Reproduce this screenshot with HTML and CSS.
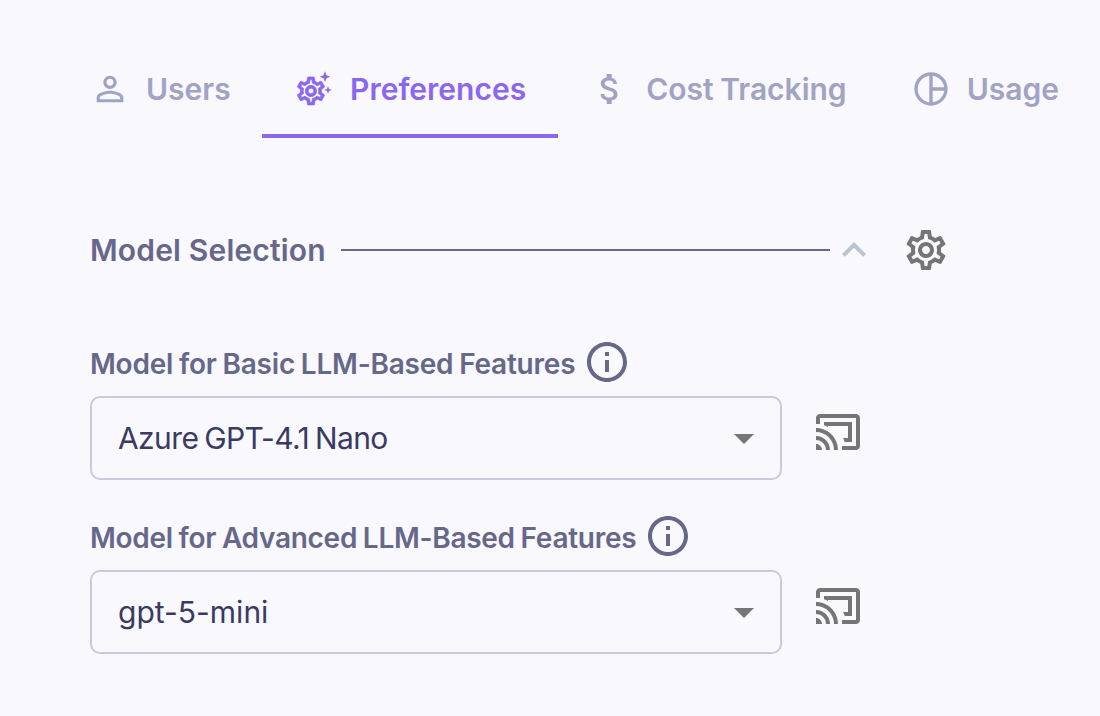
FILE: index.html
```html
<!DOCTYPE html>
<html lang="en">
<head>
<meta charset="utf-8">
<title>Preferences</title>
<link rel="stylesheet" href="styles.css">
</head>
<body>
<nav class="tabs">
  <div class="tab">
    <svg class="tab-icon" viewBox="0 0 24 24" fill="currentColor"><path d="M12 5.900c1.160 0 2.100.940 2.100 2.100s-.940 2.100-2.100 2.100S9.900 9.160 9.900 8s.940-2.100 2.100-2.100m0 9c2.970 0 6.100 1.460 6.100 2.100v1.100H5.900V17c0-.640 3.130-2.100 6.100-2.100M12 4C9.790 4 8 5.790 8 8s1.790 4 4 4 4-1.790 4-4-1.790-4-4-4zm0 9c-2.670 0-8 1.340-8 4v3h16v-3c0-2.660-5.330-4-8-4z"/></svg>
    <span>Users</span>
  </div>
  <div class="tab active">
    <svg class="tab-icon" viewBox="0 0 24 24" fill="currentColor"><g transform="translate(0.1 3.1) scale(0.84)"><path d="M19.430 12.980c.040-.320.070-.640.070-.980 0-.340-.030-.660-.070-.980l2.110-1.650c.190-.150.240-.420.120-.640l-2-3.460c-.090-.160-.260-.250-.440-.250-.060 0-.120.010-.170.030l-2.490 1c-.520-.400-1.080-.730-1.690-.980l-.380-2.650C14.460 2.180 14.250 2 14 2h-4c-.250 0-.460.180-.490.420l-.380 2.650c-.610.250-1.170.590-1.690.980l-2.490-1c-.060-.020-.120-.030-.180-.030-.170 0-.340.090-.430.250l-2 3.460c-.130.220-.070.490.120.640l2.110 1.650c-.040.320-.070.650-.070.980 0 .330.030.660.070.980l-2.110 1.650c-.190.150-.240.420-.12.640l2 3.460c.090.160.260.250.440.250.060 0 .120-.010.170-.030l2.490-1c.520.400 1.080.730 1.690.980l.380 2.650c.030.240.240.420.490.420h4c.250 0 .460-.180.490-.420l.380-2.650c.610-.250 1.170-.590 1.690-.980l2.490 1c.060.020.120.030.180.030.170 0 .340-.090.430-.250l2-3.460c.120-.220.070-.490-.12-.640l-2.110-1.650zm-1.980-1.710c.040.310.050.520.050.730 0 .210-.020.430-.05.730l-.14 1.130.890.700 1.080.840-.700 1.210-1.270-.510-1.040-.420-.900.680c-.430.320-.840.560-1.250.730l-1.060.43-.160 1.130-.200 1.350h-1.400l-.190-1.350-.160-1.130-1.060-.43c-.43-.18-.83-.41-1.230-.71l-.91-.70-1.060.43-1.270.51-.70-1.210 1.080-.84.89-.70-.14-1.130c-.03-.31-.05-.54-.05-.74s.02-.43.05-.73l.14-1.130-.89-.70-1.080-.84.70-1.210 1.270.51 1.040.42.90-.68c.43-.32.84-.56 1.250-.73l1.060-.43.16-1.130.20-1.350h1.390l.19 1.350.16 1.130 1.060.43c.43.18.83.41 1.230.71l.91.70 1.060-.43 1.270-.51.70 1.210-1.070.85-.89.70.14 1.130zM12 8c-2.210 0-4 1.790-4 4s1.790 4 4 4 4-1.790 4-4-1.790-4-4-4zm0 6c-1.100 0-2-.90-2-2s.90-2 2-2 2 .90 2 2-.90 2-2 2z" stroke="currentColor" stroke-width=".5"/></g><path d="M18.600 1.400l.900 2.300 2.300.900-2.300.900-.900 2.300-.900-2.300-2.300-.900 2.300-.900zM20.400 10.200l.600 1.800 1.800.600-1.800.600-.600 1.800-.600-1.800-1.800-.600 1.800-.600z"/></svg>
    <span>Preferences</span>
  </div>
  <div class="tab">
    <svg class="tab-icon" viewBox="0 0 24 24" fill="currentColor"><path d="M11.800 10.900c-2.270-.590-3-1.200-3-2.150 0-1.090 1.010-1.850 2.700-1.850 1.780 0 2.440.850 2.500 2.100h2.210c-.070-1.720-1.120-3.300-3.210-3.810V3h-3v2.160c-1.940.420-3.500 1.680-3.500 3.610 0 2.310 1.910 3.460 4.700 4.130 2.500.600 3 1.480 3 2.410 0 .690-.490 1.790-2.700 1.790-2.060 0-2.870-.920-2.980-2.100h-2.200c.120 2.190 1.760 3.420 3.680 3.830V21h3v-2.150c1.950-.370 3.500-1.500 3.500-3.550 0-2.840-2.430-3.810-4.700-4.400z"/></svg>
    <span>Cost Tracking</span>
  </div>
  <div class="tab">
    <svg class="tab-icon" viewBox="0 0 24 24" fill="currentColor"><path d="M12 2C6.480 2 2 6.480 2 12s4.480 10 10 10 10-4.480 10-10S17.520 2 12 2zm7.930 9H13V4.070c3.610.450 6.480 3.320 6.930 6.930zM4 12c0-4.070 3.060-7.430 7-7.930v15.860c-3.940-.500-7-3.860-7-7.930zm9 7.930V13h6.930c-.450 3.610-3.320 6.480-6.930 6.930z"/></svg>
    <span>Usage</span>
  </div>
</nav>

<main class="content">
  <header class="section-head">
    <h2 class="section-title">Model Selection</h2>
    <div class="section-rule"></div>
    <svg class="head-icon chevron" viewBox="0 0 24 24" fill="currentColor"><path d="M12 8l-6 6 1.410 1.410L12 10.830l4.590 4.580L18 14z"/></svg>
    <svg class="head-icon gear" viewBox="0 0 24 24" fill="currentColor"><path d="M19.430 12.980c.040-.320.070-.640.070-.980 0-.340-.030-.660-.070-.980l2.110-1.650c.190-.150.240-.420.120-.640l-2-3.460c-.090-.160-.260-.250-.440-.250-.060 0-.120.010-.170.030l-2.490 1c-.520-.400-1.080-.730-1.690-.980l-.380-2.650C14.460 2.180 14.250 2 14 2h-4c-.250 0-.460.180-.490.420l-.380 2.650c-.610.250-1.170.590-1.690.980l-2.490-1c-.060-.020-.120-.030-.180-.030-.170 0-.340.090-.43.250l-2 3.460c-.13.220-.07.490.12.640l2.110 1.650c-.04.320-.07.650-.07.980 0 .33.03.66.07.98l-2.110 1.650c-.19.15-.24.42-.12.64l2 3.46c.09.16.26.25.44.25.06 0 .12-.01.17-.03l2.490-1c.52.40 1.080.73 1.690.98l.38 2.650c.03.24.24.42.49.42h4c.25 0 .46-.18.49-.42l.38-2.650c.61-.25 1.170-.59 1.690-.98l2.490 1c.06.02.12.03.18.03.17 0 .34-.09.43-.25l2-3.46c.12-.22.07-.49-.12-.64l-2.110-1.650zm-1.980-1.710c.04.31.05.52.05.73 0 .21-.02.43-.05.73l-.14 1.130.89.70 1.080.84-.70 1.210-1.270-.51-1.040-.42-.90.68c-.43.32-.84.56-1.250.73l-1.060.43-.16 1.130-.20 1.350h-1.400l-.19-1.350-.16-1.130-1.060-.43c-.43-.18-.83-.41-1.230-.71l-.91-.70-1.060.43-1.270.51-.70-1.210 1.080-.84.89-.70-.14-1.130c-.03-.31-.05-.54-.05-.74s.02-.43.05-.73l.14-1.130-.89-.70-1.080-.84.70-1.210 1.270.51 1.040.42.90-.68c.43-.32.84-.56 1.250-.73l1.060-.43.16-1.130.20-1.350h1.390l.19 1.350.16 1.130 1.060.43c.43.18.83.41 1.230.71l.91.70 1.060-.43 1.270-.51.70 1.210-1.070.85-.89.70.14 1.130zM12 8c-2.210 0-4 1.790-4 4s1.790 4 4 4 4-1.790 4-4-1.790-4-4-4zm0 6c-1.100 0-2-.90-2-2s.90-2 2-2 2 .90 2 2-.90 2-2 2z"/></svg>
  </header>

  <section class="field">
    <div class="field-label">
      <span class="label-text">Model for Basic LLM-Based Features</span>
      <svg class="info" viewBox="0 0 24 24" fill="currentColor"><path d="M11 7h2v2h-2zm0 4h2v6h-2zm1-9C6.480 2 2 6.480 2 12s4.480 10 10 10 10-4.480 10-10S17.520 2 12 2zm0 18c-4.410 0-8-3.590-8-8s3.590-8 8-8 8 3.590 8 8-3.590 8-8 8z"/></svg>
    </div>
    <div class="field-row">
      <div class="select">
        <span class="value-tight">Azure GPT-4.1 Nano</span>
        <svg class="caret" viewBox="7 10 10 5" fill="currentColor"><path d="M7 10l5 5 5-5z"/></svg>
      </div>
      <svg class="cast" viewBox="0 0 24 24" fill="currentColor"><path d="M21 3H3c-1.100 0-2 .900-2 2v3h2V5h18v14h-7v2h7c1.100 0 2-.900 2-2V5c0-1.100-.900-2-2-2zM1 18v3h3c0-1.660-1.340-3-3-3zm0-4v2c2.760 0 5 2.240 5 5h2c0-3.870-3.130-7-7-7zm0-4v2c4.970 0 9 4.030 9 9h2c0-6.080-4.930-11-11-11zm18-3H5v1.630c.690.220 1.360.490 2 .830V9h10v6h-2.460c.320.640.590 1.310.820 2H19V7z"/></svg>
    </div>
  </section>

  <section class="field">
    <div class="field-label">
      <span class="label-text label-tight">Model for Advanced LLM-Based Features</span>
      <svg class="info" viewBox="0 0 24 24" fill="currentColor"><path d="M11 7h2v2h-2zm0 4h2v6h-2zm1-9C6.480 2 2 6.480 2 12s4.480 10 10 10 10-4.480 10-10S17.520 2 12 2zm0 18c-4.410 0-8-3.590-8-8s3.590-8 8-8 8 3.590 8 8-3.590 8-8 8z"/></svg>
    </div>
    <div class="field-row">
      <div class="select">
        <span>gpt-5-mini</span>
        <svg class="caret" viewBox="7 10 10 5" fill="currentColor"><path d="M7 10l5 5 5-5z"/></svg>
      </div>
      <svg class="cast" viewBox="0 0 24 24" fill="currentColor"><path d="M21 3H3c-1.100 0-2 .900-2 2v3h2V5h18v14h-7v2h7c1.100 0 2-.900 2-2V5c0-1.100-.900-2-2-2zM1 18v3h3c0-1.660-1.340-3-3-3zm0-4v2c2.760 0 5 2.240 5 5h2c0-3.870-3.130-7-7-7zm0-4v2c4.970 0 9 4.030 9 9h2c0-6.080-4.930-11-11-11zm18-3H5v1.630c.690.220 1.360.490 2 .830V9h10v6h-2.460c.320.640.590 1.310.820 2H19V7z"/></svg>
    </div>
  </section>
</main>
</body>
</html>
```
FILE: styles.css
```css
html, body {
  margin: 0;
  padding: 0;
  height: 716px;
  overflow: hidden;
  background: #f8f8fd;
  font-family: Inter, "Liberation Sans", sans-serif;
}

.tabs {
  display: flex;
  box-sizing: border-box;
  height: 138px;
  padding: 40px 0 0 58px;
}

.tab {
  display: flex;
  align-items: center;
  gap: 16px;
  box-sizing: border-box;
  height: 98px;
  padding: 4px 32px 0;
  border-bottom: 4px solid transparent;
  font-size: 30px;
  font-weight: 600;
  word-spacing: -1px;
  color: #a1a3c4;
}

.tab:first-child {
  padding-right: 31.4px;
}

.tab.active {
  color: #8b67ee;
  border-bottom-color: #8b67ee;
}

.tab-icon {
  width: 40px;
  height: 40px;
  flex: none;
}

.content {
  padding: 90px 0 0 90px;
}

.section-head {
  display: flex;
  align-items: center;
  height: 44px;
}

.section-title {
  margin: 0;
  font-size: 30px;
  font-weight: 600;
  letter-spacing: .17px;
  color: #666789;
  white-space: nowrap;
}

.section-rule {
  width: 489px;
  height: 2px;
  margin-left: 15px;
  flex: none;
  background: #666789;
}

.head-icon {
  width: 48px;
  height: 48px;
  flex: none;
}

.chevron {
  color: #b9c5cc;
}

.gear {
  margin-left: 24px;
  color: #757575;
}

.field {
  width: 800px;
}

.section-head + .field {
  margin-top: 70px;
}

.field + .field {
  margin-top: 36px;
}

.field-label {
  display: flex;
  align-items: center;
  gap: 8px;
  height: 40px;
  font-size: 28px;
  font-weight: 600;
  letter-spacing: -.22px;
  word-spacing: -1px;
  color: #666789;
}

.label-text {
  margin-top: 4px;
}

.label-tight {
  letter-spacing: -.28px;
}

.info {
  width: 48px;
  height: 48px;
  margin: -4px 0;
  flex: none;
}

.field-row {
  display: flex;
  align-items: flex-start;
  gap: 32px;
  margin-top: 14px;
}

.select {
  box-sizing: border-box;
  width: 692px;
  height: 84px;
  display: flex;
  align-items: center;
  justify-content: space-between;
  padding: 0 26px;
  border: 2px solid #c8cbe0;
  border-radius: 10px;
  font-size: 30px;
  color: #3a3a62;
}

.value-tight {
  letter-spacing: -.6px;
  word-spacing: -2px;
}

.caret {
  width: 20px;
  height: 10px;
  margin-top: 2px;
  color: #757575;
}

.cast {
  width: 48px;
  height: 48px;
  margin-top: 12px;
  flex: none;
  color: #757575;
}
```
